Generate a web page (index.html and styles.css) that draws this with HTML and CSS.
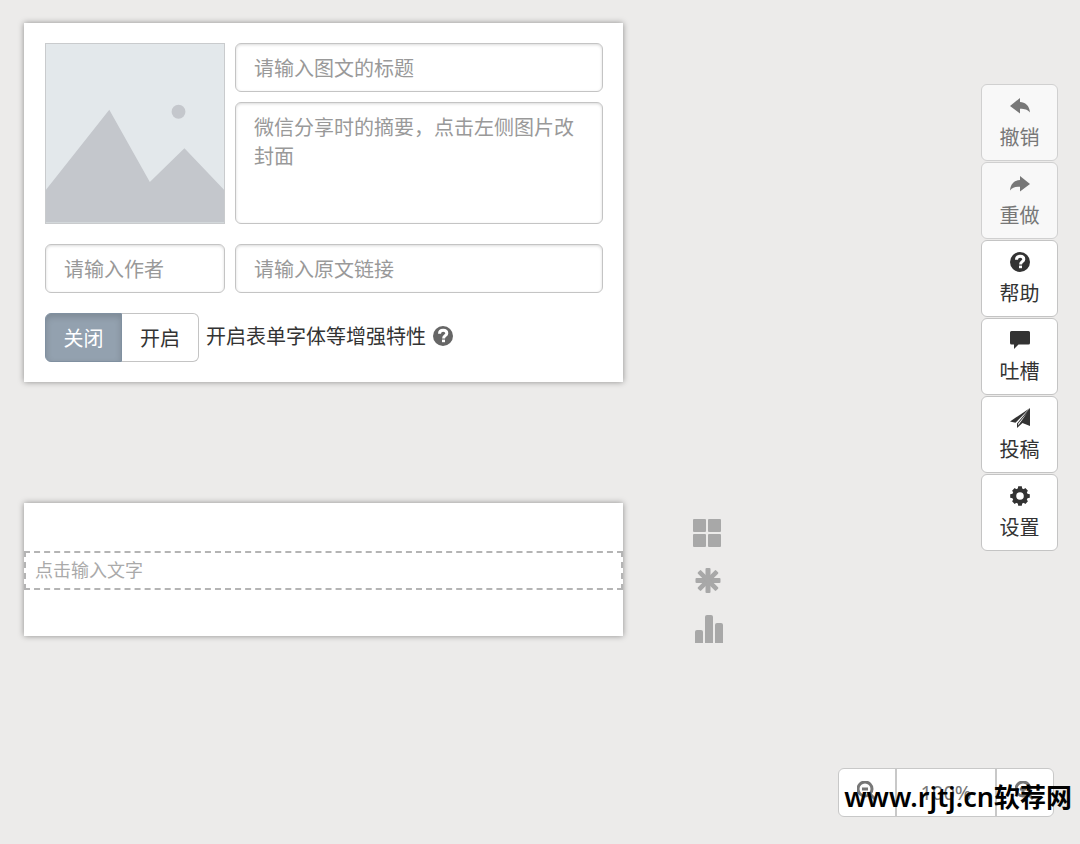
FILE: index.html
```
<!DOCTYPE html>
<html lang="zh-CN">
<head>
  <meta charset="utf-8">
  <meta name="viewport" content="width=device-width, initial-scale=1">
  <title>图文编辑</title>
  <link rel="stylesheet" href="styles.css">
</head>
<body>
  <div class="page">
    <main class="workspace">
      <form class="card article-form">
        <button type="button" class="cover" aria-label="更换封面">
          <svg viewBox="0 0 180 180" aria-hidden="true">
            <path d="M0 147 L64 66 L105 139 L140 105 L180 147 V180 H0 Z"/>
            <circle cx="134" cy="68" r="7"/>
          </svg>
        </button>
        <div class="article-text">
          <input type="text" class="field" placeholder="请输入图文的标题" aria-label="标题">
          <textarea class="field summary" placeholder="微信分享时的摘要，点击左侧图片改封面" aria-label="摘要"></textarea>
        </div>
        <input type="text" class="field" placeholder="请输入作者" aria-label="作者">
        <input type="text" class="field" placeholder="请输入原文链接" aria-label="原文链接">
        <div class="feature-row">
          <div class="switch" role="group" aria-labelledby="feature-label">
            <button type="button" class="active" aria-pressed="true">关闭</button>
            <button type="button" aria-pressed="false">开启</button>
          </div>
          <div class="feature-text">
            <span id="feature-label">开启表单字体等增强特性</span>
            <svg class="icon hint" viewBox="0 0 20 20" aria-hidden="true">
              <circle cx="10" cy="10" r="10"/>
              <path class="mark" d="M6.5 7.8 C6.5 5.4 8 4.2 10.2 4.2 C12.4 4.2 13.8 5.5 13.8 7.2 C13.8 9.8 10.6 9.6 10.6 12.4"/>
              <rect class="dot" x="9" y="13.6" width="3" height="2.6"/>
            </svg>
          </div>
        </div>
      </form>

      <section class="card editor">
        <input type="text" class="editor-line" placeholder="点击输入文字" aria-label="正文">
      </section>

      <nav class="insert-menu">
        <button type="button" aria-label="模板">
          <svg viewBox="0 0 28 28">
            <rect width="13" height="13" rx="1"/>
            <rect x="15" width="13" height="13" rx="1"/>
            <rect y="15" width="13" height="13" rx="1"/>
            <rect x="15" y="15" width="13" height="13" rx="1"/>
          </svg>
        </button>
        <button type="button" aria-label="符号">
          <svg viewBox="0 0 28 28">
            <rect x="12.5" y="1" width="5" height="25" rx="1"/>
            <rect x="2.5" y="11" width="25" height="5" rx="1"/>
            <rect x="12.7" y="0.6" width="4.6" height="25.8" rx="1" transform="rotate(45 15 13.5)"/>
            <rect x="12.7" y="0.6" width="4.6" height="25.8" rx="1" transform="rotate(135 15 13.5)"/>
          </svg>
        </button>
        <button type="button" class="chart" aria-label="图表">
          <svg viewBox="0 0 28 28">
            <path d="M0 28 V17 Q0 15 2 15 H6 Q8 15 8 17 V28 Z"/>
            <path d="M10 28 V2 Q10 0 12 0 H16 Q18 0 18 2 V28 Z"/>
            <path d="M20 28 V10 Q20 8 22 8 H26 Q28 8 28 10 V28 Z"/>
          </svg>
        </button>
      </nav>
    </main>

    <aside class="toolbar">
      <button type="button" disabled>
        <svg class="icon" viewBox="0 0 20 20" aria-hidden="true"><path d="M0 10 L10 2 V6 C15 6 19.5 9.5 20 16.5 C17.5 13.5 15 12.7 10 12.7 V17.5 Z"/></svg>
        撤销
      </button>
      <button type="button" disabled>
        <svg class="icon" viewBox="0 0 20 20" aria-hidden="true"><path d="M20 10 L10 2 V6 C5 6 0.5 9.5 0 16.5 C2.5 13.5 5 12.7 10 12.7 V17.5 Z"/></svg>
        重做
      </button>
      <button type="button">
        <svg class="icon" viewBox="0 0 20 20" aria-hidden="true">
          <circle cx="10" cy="10" r="10"/>
          <path class="mark" d="M6.5 7.8 C6.5 5.4 8 4.2 10.2 4.2 C12.4 4.2 13.8 5.5 13.8 7.2 C13.8 9.8 10.6 9.6 10.6 12.4"/>
          <rect class="dot" x="9" y="13.6" width="3" height="2.6"/>
        </svg>
        帮助
      </button>
      <button type="button">
        <svg class="icon" viewBox="0 0 20 20" aria-hidden="true"><path d="M1.5 1 H18.5 Q20 1 20 2.5 V13 Q20 14.5 18.5 14.5 H8.5 L4 19 V14.5 H1.5 Q0 14.5 0 13 V2.5 Q0 1 1.5 1 Z"/></svg>
        吐槽
      </button>
      <button type="button">
        <svg class="icon" viewBox="0 0 20 20" aria-hidden="true">
          <path d="M0 13.5 L20 0 L5.5 14.8 Z"/>
          <path d="M20 0 V18 L12.5 15 L7 20 V15.5 Z M17 5 L8.2 15.6 V17.4 Z" fill-rule="evenodd"/>
        </svg>
        投稿
      </button>
      <button type="button">
        <svg class="icon" viewBox="0 0 20 20" aria-hidden="true">
          <circle class="ring" cx="10" cy="10" r="5.8"/>
          <path d="M8.2 0.2 H11.8 L12.4 4 H7.6 Z M8.2 19.8 H11.8 L12.4 16 H7.6 Z"/>
          <path d="M8.2 0.6 H11.8 L12.4 4 H7.6 Z M8.2 19.4 H11.8 L12.4 16 H7.6 Z" transform="rotate(45 10 10)"/>
          <path d="M8.2 0.2 H11.8 L12.4 4 H7.6 Z M8.2 19.8 H11.8 L12.4 16 H7.6 Z" transform="rotate(90 10 10)"/>
          <path d="M8.2 0.6 H11.8 L12.4 4 H7.6 Z M8.2 19.4 H11.8 L12.4 16 H7.6 Z" transform="rotate(135 10 10)"/>
        </svg>
        设置
      </button>
    </aside>
  </div>

  <footer class="footer">
    <div class="zoom">
      <button type="button" aria-label="缩小">
        <svg class="icon" viewBox="0 0 20 20"><circle cx="8" cy="8" r="7"/><path d="M5 8 H11 M13 13 L18 18"/></svg>
      </button>
      <button type="button" class="zoom-value">100%</button>
      <button type="button" aria-label="放大">
        <svg class="icon" viewBox="0 0 20 20"><circle cx="8" cy="8" r="7"/><path d="M5 8 H11 M8 5 V11 M13 13 L18 18"/></svg>
      </button>
    </div>
    <div class="watermark"><span class="domain">www.rjtj.cn</span>软荐网</div>
  </footer>
</body>
</html>
```

FILE: styles.css
```
* {
  box-sizing: border-box;
}

body {
  display: flex;
  flex-direction: column;
  min-height: 100vh;
  margin: 0;
  background-color: #ecebea;
  color: #333;
  font-family: "Noto Sans CJK SC", sans-serif;
  font-size: 20px;
  line-height: 29px;
}

button,
input,
textarea {
  margin: 0;
  font: inherit;
  color: inherit;
}

button {
  padding: 0;
  cursor: pointer;
}

::placeholder {
  color: #999;
  opacity: 1;
}

.icon {
  width: 20px;
  height: 20px;
  fill: currentColor;
}

.icon .mark {
  fill: none;
  stroke: #fff;
  stroke-width: 3;
}

.icon .dot {
  fill: #fff;
}

.icon .ring {
  fill: none;
  stroke: currentColor;
  stroke-width: 4;
}

.page {
  display: flex;
  flex: 1;
  justify-content: space-between;
  align-items: flex-start;
  gap: 20px;
  padding: 23px 22px 23px 24px;
}

/* main column */
.workspace {
  display: grid;
  flex: 1;
  grid-template-columns: minmax(0, 599px) 32px;
  align-items: start;
  column-gap: 69px;
  row-gap: 121px;
}

.card {
  grid-column: 1;
  background-color: #fff;
  box-shadow: 0 0 6px rgba(0, 0, 0, 0.4);
}

.article-form {
  display: grid;
  grid-template-columns: 180px minmax(0, 1fr);
  gap: 20px 10px;
  padding: 20px 20px 20px 21px;
}

.cover {
  height: 181px;
  border: 1px solid #c9cbcd;
  background-color: #e3e8eb;
}

.cover svg {
  display: block;
  width: 100%;
  height: 100%;
  fill: #c4c7cc;
}

.article-text {
  display: flex;
  flex-direction: column;
  gap: 10px;
}

.field {
  width: 100%;
  height: 49px;
  padding: 9px 18px;
  border: 1px solid #c4c4c4;
  border-radius: 6px;
  background-color: #fff;
  box-shadow: inset 0 1px 3px rgba(0, 0, 0, 0.15);
}

.summary {
  flex: 1;
  resize: none;
}

.feature-row {
  display: flex;
  grid-column: 1 / -1;
  align-items: center;
  gap: 7px;
}

.feature-text {
  display: flex;
  align-items: center;
  gap: 7px;
  padding-bottom: 4px;
}

.switch {
  display: flex;
}

.switch button {
  width: 77px;
  height: 49px;
  border: 1px solid #c4c4c4;
  border-left: 0;
  border-radius: 0 6px 6px 0;
  background-color: #fff;
}

.switch .active {
  border: 1px solid #8090a0;
  border-radius: 6px 0 0 6px;
  background-color: #93a1af;
  box-shadow: inset 0 3px 6px rgba(0, 0, 0, 0.15);
  color: #fff;
}

.hint {
  color: #666;
}

.editor {
  padding: 48px 0 46px;
}

.editor-line {
  display: block;
  width: 100%;
  height: 39px;
  padding: 0 9px 3px;
  border: 2px dashed #b4b4b4;
  background-color: transparent;
  font-size: 18px;
}

.editor-line::placeholder {
  color: #aaa;
}

.insert-menu {
  display: flex;
  grid-column: 2;
  flex-direction: column;
  gap: 20px;
  padding: 16px 0 0 1px;
}

.insert-menu button {
  width: 28px;
  height: 28px;
  border: 0;
  background: none;
}

.insert-menu .chart {
  align-self: center;
}

.insert-menu svg {
  display: block;
  fill: #a8a8a8;
}

/* right toolbar */
.toolbar {
  display: flex;
  flex-direction: column;
  gap: 1px;
  padding-top: 61px;
}

.toolbar button {
  display: flex;
  flex-direction: column;
  align-items: center;
  justify-content: center;
  gap: 6px;
  width: 77px;
  height: 77px;
  padding-top: 2px;
  border: 1px solid #c4c4c4;
  border-radius: 6px;
  background-color: #fff;
}

.toolbar button:disabled {
  border-color: #d0d0d0;
  background-color: #f8f8f8;
  color: #777;
  cursor: default;
}

/* zoom control */
.footer {
  position: relative;
  display: flex;
  justify-content: flex-end;
  padding: 0 26px 27px;
}

.zoom {
  display: flex;
  border: 1px solid #c8c8c8;
  border-radius: 6px;
  background-color: #fff;
  color: #777;
}

.zoom button {
  width: 56px;
  height: 47px;
  border: 0;
  background: none;
}

.zoom .zoom-value {
  width: 102px;
  border: solid #c8c8c8;
  border-width: 0 2px;
  font-family: "Noto Sans", sans-serif;
}

.zoom .icon {
  fill: none;
  stroke: currentColor;
  stroke-width: 3;
}

.watermark {
  position: absolute;
  right: 8px;
  bottom: 28px;
  color: #000;
  font-family: "Noto Sans", "Noto Sans CJK SC", sans-serif;
  font-size: 26px;
  font-weight: 600;
  line-height: 38px;
  pointer-events: none;
}

.watermark .domain {
  font-size: 27px;
}
```
